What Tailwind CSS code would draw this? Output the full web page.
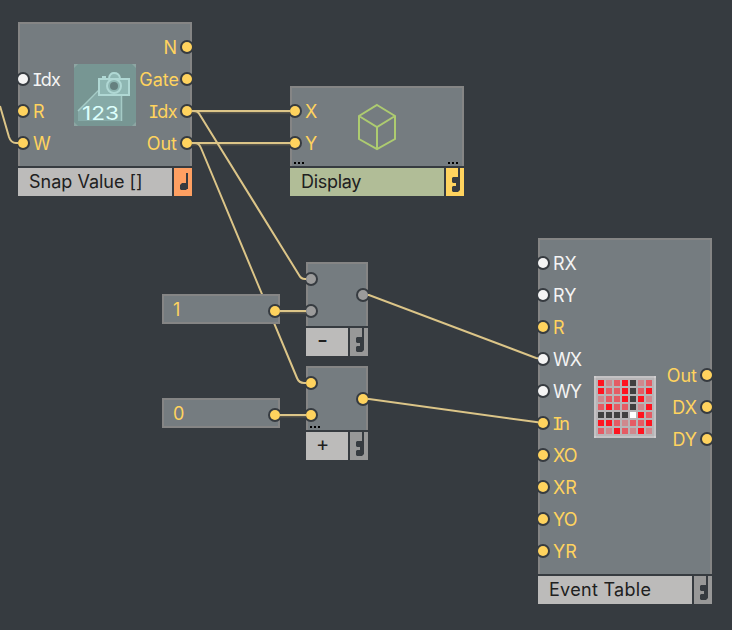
<!DOCTYPE html>
<html lang="en">
<head>
<meta charset="utf-8">
<title>Structure</title>
<script src="https://cdn.jsdelivr.net/npm/@tailwindcss/browser@4"></script>
</head>
<body class="bg-[#363b40]">
<svg width="0" height="0" class="absolute">
  <defs>
    <g id="single" fill="#363b40"><path d="M12 5h2v16h-2z"/><path d="M8 15h6v5l-2 2H7l-1-1v-4z"/></g>
    <g id="double" fill="#363b40"><path d="M12 0h2v22l-2 2H7l-1-1v-4l1-1h3v-3H7l-1-1v-4l1-1h5z"/></g>
  </defs>
</svg>
<main class="relative w-[732px] h-[630px] overflow-hidden bg-[#363b40] font-['Inter',sans-serif] text-[18px] leading-8 text-[#ffd35e] whitespace-nowrap">

  <svg class="absolute inset-0" width="732" height="630" fill="none">
    <g stroke="#57544a" stroke-width="3" transform="translate(0 1)">
      <path d="M187 111H295M187 143H295M275 311H311M275 415H311"/>
    </g>
    <g stroke="#dcc588" stroke-width="2">
      <path d="M0 106L9 137Q11 143 16 143H23"/>
      <path d="M187 111H295M187 143H295M275 311H311M275 415H311"/>
      <path d="M187 111H194Q198 111 200 115L299 275Q301 279 305 279H311"/>
      <path d="M187 143H195Q199 143 201 148L297 378Q299 383 304 383H311"/>
      <path d="M363 295H369L536 358L543 359"/>
      <path d="M363 399H369L536 422L543 423"/>
    </g>
  </svg>

  <!-- Snap Value -->
  <section class="absolute left-[18px] top-[22px] w-[174px] flex flex-col gap-[2px]">
    <div class="relative h-36 bg-[#757c80] overflow-hidden flex justify-between shadow-[inset_2px_0_#858585,inset_-2px_0_#858585,inset_0_2px_#858585]">
      <div class="pt-[41px]">
        <div class="h-8 flex items-center gap-[5px] text-[#f4f4f4]"><i class="size-[10px] rounded-full bg-[#f4f4f4] ring-2 ring-[#363b40]"></i><span class="pt-[2px] -ml-px tracking-[-0.8px]"><b class="font-['DejaVu_Sans_Mono',monospace] font-normal tracking-[-2px]">I</b>dx</span></div>
        <div class="h-8 flex items-center gap-[5px]"><i class="size-[10px] rounded-full bg-[#ffd35e] ring-2 ring-[#363b40]"></i><span class="pt-[2px]">R</span></div>
        <div class="h-8 flex items-center gap-[5px]"><i class="size-[10px] rounded-full bg-[#ffd35e] ring-2 ring-[#363b40]"></i><span class="pt-[2px] tracking-[-1px]">W</span></div>
      </div>
      <svg class="absolute left-14 top-[42px]" width="62" height="62" fill="none">
        <path fill="#779693" d="M0 0h62v62H0z"/>
        <path fill="#8da6a3" d="M0 0h4L0 4zM62 0v4l-4-4zM0 62v-4l4 4zM62 62h-4l4-4z"/>
        <path fill="#86aaa7" d="M4 57V46L28 25H48V57z"/>
        <path stroke="#a5cbc6" stroke-width="1.5" d="M4 47L32 19M47.500 31V57"/>
        <path fill="#8fb7b3" stroke="#b0d8d4" stroke-width="2" d="M25 15H55V31H25zM35 14Q36 9 40 9Q45 9 46 14"/>
        <path stroke="#b0d8d4" stroke-width="2" d="M28 13H32"/>
        <circle cx="40" cy="22" r="7" fill="#8fb7b3" stroke="#b0d8d4" stroke-width="2"/><circle cx="40" cy="22" r="4" fill="#66807f"/>
        <text x="8" y="56" fill="#dcfffc" font-size="19" textLength="37" lengthAdjust="spacingAndGlyphs">123</text>
      </svg>
      <div class="pt-[9px]">
        <div class="h-8 flex items-center justify-end gap-[5px]"><span class="pt-[2px]">N</span><i class="size-[10px] rounded-full bg-[#ffd35e] ring-2 ring-[#363b40]"></i></div>
        <div class="h-8 flex items-center justify-end gap-[3px]"><span class="pt-[2px]">Gate</span><i class="size-[10px] rounded-full bg-[#ffd35e] ring-2 ring-[#363b40]"></i></div>
        <div class="h-8 flex items-center justify-end gap-[5px]"><span class="pt-[2px] tracking-[-0.5px]"><b class="font-['DejaVu_Sans_Mono',monospace] font-normal tracking-[-2px]">I</b>dx</span><i class="size-[10px] rounded-full bg-[#ffd35e] ring-2 ring-[#363b40]"></i></div>
        <div class="h-8 flex items-center justify-end gap-[5px]"><span class="pt-[2px]">Out</span><i class="size-[10px] rounded-full bg-[#ffd35e] ring-2 ring-[#363b40]"></i></div>
      </div>
    </div>
    <div class="h-7 flex gap-[2px]">
      <div class="w-[154px] bg-[#bcbbba] pl-[11px] leading-7 text-[#202020]">Snap Value []</div>
      <div class="w-[18px] bg-[#ffa062]"><svg width="18" height="28"><use href="#single"/></svg></div>
    </div>
  </section>

  <!-- Display -->
  <section class="absolute left-[290px] top-[86px] w-[174px] flex flex-col gap-[2px]">
    <div class="relative h-20 bg-[#757c80] overflow-hidden pt-[9px] shadow-[inset_2px_0_#858585,inset_-2px_0_#858585,inset_0_2px_#858585]">
      <div class="h-8 flex items-center gap-[5px]"><i class="size-[10px] rounded-full bg-[#ffd35e] ring-2 ring-[#363b40]"></i><span class="pt-[2px]">X</span></div>
      <div class="h-8 flex items-center gap-[5px]"><i class="size-[10px] rounded-full bg-[#ffd35e] ring-2 ring-[#363b40]"></i><span class="pt-[2px]">Y</span></div>
      <svg class="absolute left-0 top-0" width="174" height="80" fill="none"><path stroke="#adcb70" stroke-width="2" d="M87 19L105 30V53L87 63L69 53V30zM69 30L87 41L105 30M87 41V63"/><path fill="#000" d="M4 76h2v2H4zM8 76h2v2H8zM12 76h2v2h-2zM158 76h2v2h-2zM162 76h2v2h-2zM166 76h2v2h-2z"/></svg>
    </div>
    <div class="h-7 flex gap-[2px]">
      <div class="w-[154px] bg-[#b1bd97] pl-[11px] leading-7 tracking-[-0.3px] text-[#202020]">Display</div>
      <div class="w-[18px] bg-[#ffd35e]"><svg width="18" height="28"><use href="#double"/></svg></div>
    </div>
  </section>

  <!-- Constants -->
  <section class="absolute left-[162px] top-[294px] w-[118px] h-[30px] pl-[11px] bg-[#757c80] overflow-hidden flex items-center justify-between shadow-[inset_0_0_0_2px_#858585]"><span class="pt-[2px]">1</span><i class="mt-[4px] size-[10px] rounded-full bg-[#ffd35e] ring-2 ring-[#363b40]"></i></section>
  <section class="absolute left-[162px] top-[398px] w-[118px] h-[30px] pl-[11px] bg-[#757c80] overflow-hidden flex items-center justify-between shadow-[inset_0_0_0_2px_#858585]"><span class="pt-[2px] tracking-[-1px]">0</span><i class="mt-[4px] size-[10px] rounded-full bg-[#ffd35e] ring-2 ring-[#363b40]"></i></section>

  <!-- Subtract -->
  <section class="absolute left-[306px] top-[262px] w-[62px] flex flex-col gap-[2px]">
    <div class="h-16 bg-[#757c80] overflow-hidden flex justify-between shadow-[inset_2px_0_#858585,inset_-2px_0_#858585,inset_0_2px_#858585]">
      <div class="pt-3 flex flex-col gap-[22px]"><i class="size-[10px] rounded-full bg-[#9b9b9b] ring-2 ring-[#363b40]"></i><i class="size-[10px] rounded-full bg-[#9b9b9b] ring-2 ring-[#363b40]"></i></div>
      <div class="pt-7"><i class="block size-[10px] rounded-full bg-[#9b9b9b] ring-2 ring-[#363b40]"></i></div>
    </div>
    <div class="h-7 flex gap-[2px]">
      <div class="w-[42px] bg-[#bcbbba] pl-[11px] leading-[24px] text-[24px] text-[#202020]">-</div>
      <div class="w-[18px] bg-[#989898]"><svg width="18" height="28"><use href="#double"/></svg></div>
    </div>
  </section>

  <!-- Add -->
  <section class="absolute left-[306px] top-[366px] w-[62px] flex flex-col gap-[2px]">
    <div class="relative h-16 bg-[#757c80] overflow-hidden flex justify-between shadow-[inset_2px_0_#858585,inset_-2px_0_#858585,inset_0_2px_#858585]">
      <div class="pt-3 flex flex-col gap-[22px]"><i class="size-[10px] rounded-full bg-[#ffd35e] ring-2 ring-[#363b40]"></i><i class="size-[10px] rounded-full bg-[#ffd35e] ring-2 ring-[#363b40]"></i></div>
      <div class="pt-7"><i class="block size-[10px] rounded-full bg-[#ffd35e] ring-2 ring-[#363b40]"></i></div>
      <svg class="absolute left-0 top-0" width="62" height="64"><path d="M4 60h2v2H4zM8 60h2v2H8zM12 60h2v2h-2z"/></svg>
    </div>
    <div class="h-7 flex gap-[2px]">
      <div class="w-[42px] bg-[#bcbbba] pl-[10px] leading-[25px] text-[20px] text-[#202020]">+</div>
      <div class="w-[18px] bg-[#989898]"><svg width="18" height="28"><use href="#double"/></svg></div>
    </div>
  </section>

  <!-- Event Table -->
  <section class="absolute left-[538px] top-[238px] w-[174px] flex flex-col gap-[2px]">
    <div class="relative h-[336px] bg-[#757c80] overflow-hidden flex justify-between shadow-[inset_2px_0_#858585,inset_-2px_0_#858585,inset_0_2px_#858585]">
      <div class="pt-[9px]">
        <div class="h-8 flex items-center gap-[5px] text-[#f4f4f4]"><i class="size-[10px] rounded-full bg-[#f4f4f4] ring-2 ring-[#363b40]"></i><span class="pt-[2px]">RX</span></div>
        <div class="h-8 flex items-center gap-[5px] text-[#f4f4f4]"><i class="size-[10px] rounded-full bg-[#f4f4f4] ring-2 ring-[#363b40]"></i><span class="pt-[2px]">RY</span></div>
        <div class="h-8 flex items-center gap-[5px]"><i class="size-[10px] rounded-full bg-[#ffd35e] ring-2 ring-[#363b40]"></i><span class="pt-[2px]">R</span></div>
        <div class="h-8 flex items-center gap-[5px] text-[#f4f4f4]"><i class="size-[10px] rounded-full bg-[#f4f4f4] ring-2 ring-[#363b40]"></i><span class="pt-[2px] tracking-[-1px]">WX</span></div>
        <div class="h-8 flex items-center gap-[5px] text-[#f4f4f4]"><i class="size-[10px] rounded-full bg-[#f4f4f4] ring-2 ring-[#363b40]"></i><span class="pt-[2px] tracking-[-1px]">WY</span></div>
        <div class="h-8 flex items-center gap-[5px]"><i class="size-[10px] rounded-full bg-[#ffd35e] ring-2 ring-[#363b40]"></i><span class="pt-[2px] -ml-px tracking-[-0.5px]"><b class="font-['DejaVu_Sans_Mono',monospace] font-normal tracking-[-3.5px]">I</b>n</span></div>
        <div class="h-8 flex items-center gap-[5px]"><i class="size-[10px] rounded-full bg-[#ffd35e] ring-2 ring-[#363b40]"></i><span class="pt-[2px] tracking-[-0.8px]">XO</span></div>
        <div class="h-8 flex items-center gap-[5px]"><i class="size-[10px] rounded-full bg-[#ffd35e] ring-2 ring-[#363b40]"></i><span class="pt-[2px]">XR</span></div>
        <div class="h-8 flex items-center gap-[5px]"><i class="size-[10px] rounded-full bg-[#ffd35e] ring-2 ring-[#363b40]"></i><span class="pt-[2px] tracking-[-0.8px]">YO</span></div>
        <div class="h-8 flex items-center gap-[5px]"><i class="size-[10px] rounded-full bg-[#ffd35e] ring-2 ring-[#363b40]"></i><span class="pt-[2px]">YR</span></div>
      </div>
      <svg class="absolute left-14 top-[138px]" width="62" height="62">
        <path fill="#c4c2c4" d="M0 0h62v62H0z"/><path fill="#d0ced0" d="M0 0h2v2H0zM60 0h2v2h-2zM0 60h2v2H0zM60 60h2v2h-2z"/><path fill="#b7b5b7" d="M2 2h58v58H2z"/>
        <path fill="#ff1420" d="M4 4h6v6H4zM28 4h6v6h-6zM4 12h6v6H4zM28 12h6v6h-6zM52 12h6v6h-6zM28 20h6v6h-6zM44 20h6v6h-6zM12 28h6v6h-6zM52 28h6v6h-6zM44 36h6v6h-6zM4 44h6v6H4zM12 44h6v6h-6zM52 44h6v6h-6zM20 52h6v6h-6zM44 52h6v6h-6z"/>
        <path fill="#e55b64" d="M20 4h6v6h-6zM52 4h6v6h-6zM12 12h6v6h-6zM20 12h6v6h-6zM44 12h6v6h-6zM12 20h6v6h-6zM20 20h6v6h-6zM4 28h6v6H4zM20 28h6v6h-6zM28 28h6v6h-6zM52 36h6v6h-6zM20 44h6v6h-6zM36 44h6v6h-6zM44 44h6v6h-6zM4 52h6v6H4zM28 52h6v6h-6z"/>
        <path fill="#cf888d" d="M12 4h6v6h-6zM44 4h6v6h-6zM4 20h6v6H4zM52 20h6v6h-6zM44 28h6v6h-6zM28 44h6v6h-6zM12 52h6v6h-6zM36 52h6v6h-6zM52 52h6v6h-6z"/>
        <path fill="#404040" d="M36 4h6v6h-6zM36 12h6v6h-6zM36 20h6v6h-6zM36 28h6v6h-6zM4 36h6v6H4zM12 36h6v6h-6zM20 36h6v6h-6zM28 36h6v6h-6z"/>
        <path fill="#fff" d="M36 36h6v6h-6z"/>
      </svg>
      <div class="pt-[121px]">
        <div class="h-8 flex items-center justify-end gap-[5px]"><span class="pt-[2px]">Out</span><i class="size-[10px] rounded-full bg-[#ffd35e] ring-2 ring-[#363b40]"></i></div>
        <div class="h-8 flex items-center justify-end gap-[5px]"><span class="pt-[2px]">DX</span><i class="size-[10px] rounded-full bg-[#ffd35e] ring-2 ring-[#363b40]"></i></div>
        <div class="h-8 flex items-center justify-end gap-[5px]"><span class="pt-[2px]">DY</span><i class="size-[10px] rounded-full bg-[#ffd35e] ring-2 ring-[#363b40]"></i></div>
      </div>
    </div>
    <div class="h-7 flex gap-[2px]">
      <div class="w-[154px] bg-[#bcbbba] pl-[11px] leading-7 tracking-[0.3px] text-[#202020]">Event Table</div>
      <div class="w-[18px] bg-[#989898]"><svg width="18" height="28"><use href="#double"/></svg></div>
    </div>
  </section>
</main>
</body>
</html>
